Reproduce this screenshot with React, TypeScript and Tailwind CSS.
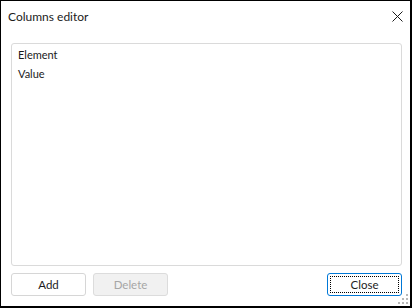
import React from "react";

function Grip() {
  const dots = [
    [8, 0],
    [4, 4], [8, 4],
    [0, 8], [4, 8], [8, 8],
  ];
  return (
    <svg width="11" height="11" viewBox="0 0 11 11" className="absolute right-[1px] bottom-[1px]">
      {dots.map(([x, y], i) => (
        <rect key={i} x={x} y={y} width="2" height="2" fill="#b8b8b8" />
      ))}
    </svg>
  );
}

export default function App() {
  const font = { fontFamily: 'Lato, "Noto Sans", sans-serif' };
  return (
    <div
      className="relative w-[412px] h-[308px] bg-white border-black border-l border-t border-r-2 border-b-2 flex flex-col text-[#1b1b1b]"
      style={font}
    >
      <div className="h-[32px] flex items-center justify-between pl-[7px] pr-[7px] shrink-0">
        <span className="text-[12px] leading-none">Columns editor</span>
        <svg width="11" height="11" viewBox="0 0 11 11" className="mb-[1px]">
          <path d="M0.5 0.5 L10.5 10.5 M10.5 0.5 L0.5 10.5" stroke="#1b1b1b" strokeWidth="1" />
        </svg>
      </div>
      <div className="flex-1 flex flex-col pl-[10px] pr-[8px] pt-[10px]">
        <div className="h-[223px] border border-[#dadada] rounded-[3px] pt-[2px] pl-[6px] text-[11px]">
          <div className="h-[19px] flex items-center">Element</div>
          <div className="h-[19px] flex items-center">Value</div>
        </div>
        <div className="mt-[7px] h-[23px] flex text-[11.5px]">
          <button className="w-[75px] h-[23px] border border-[#d6d6d6] rounded-[3px] bg-white text-[#1b1b1b]">
            Add
          </button>
          <button
            disabled
            className="ml-[7px] w-[75px] h-[23px] border border-[#dcdcdc] rounded-[3px] bg-[#f1f1f1] text-[#a6a6a6]"
          >
            Delete
          </button>
          <div className="flex-1" />
          <button className="w-[75px] h-[23px] border border-[#0078d7] rounded-[3px] bg-white p-[2px] text-[#1b1b1b]">
            <div className="w-full h-full border border-dotted border-black flex items-center justify-center">
              Close
            </div>
          </button>
        </div>
      </div>
      <Grip />
    </div>
  );
}
